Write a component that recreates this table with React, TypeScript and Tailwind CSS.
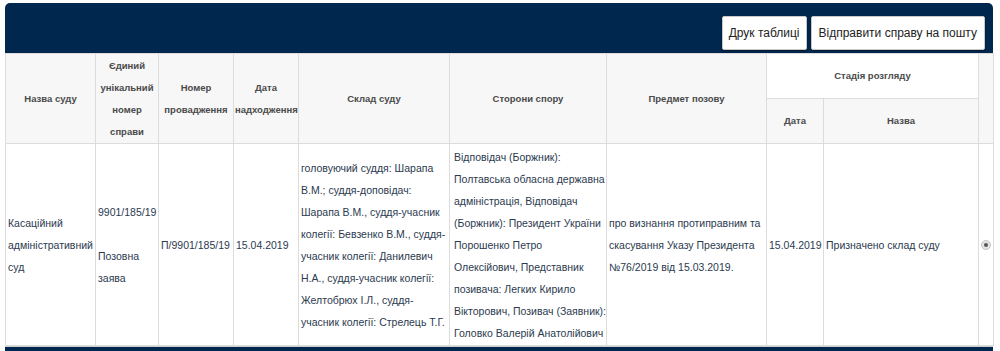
import React from 'react';

const font = { fontFamily: '"Liberation Sans", Arial, sans-serif' };

const th = 'border border-[#dcdcdc] bg-[#f7f7f7] px-[1px] py-0 text-center align-middle text-[9.5px] font-bold text-[#4a4a4a]';
const td = 'border border-[#dcdcdc] bg-white px-[2px] py-[1px] align-middle text-left text-[#2b3a4f]';

const judges = [
  'головуючий суддя: Шарапа',
  'В.М.; суддя-доповідач:',
  'Шарапа В.М., суддя-учасник',
  'колегії: Бевзенко В.М., суддя-',
  'учасник колегії: Данилевич',
  'Н.А., суддя-учасник колегії:',
  'Желтобрюх І.Л., суддя-',
  'учасник колегії: Стрелець Т.Г.',
];

const parties = [
  'Відповідач (Боржник):',
  'Полтавська обласна державна',
  'адміністрація, Відповідач',
  '(Боржник): Президент України',
  'Порошенко Петро',
  'Олексійович, Представник',
  'позивача: Легких Кирило',
  'Вікторович, Позивач (Заявник):',
  'Головко Валерій Анатолійович',
];

const Lines: React.FC<{ lines: string[] }> = ({ lines }) => (
  <>
    {lines.map((l, i) => (
      <span key={i} className="block whitespace-nowrap">{l}</span>
    ))}
  </>
);

const App: React.FC = () => {
  return (
    <div className="w-[1000px] h-[351px] overflow-hidden bg-white pt-[3px] pl-[5px]" style={font}>
      <div className="w-[988px]">
        {/* шапка з кнопками */}
        <div className="h-[50px] rounded-t-[5px] bg-[#00274e] flex justify-end items-end gap-[4px] pr-[8px] pb-[3px]">
          <button className="h-[34px] px-[6px] bg-white border border-[#c8c8c8] rounded-[2px] text-[12px] text-[#222] shadow-[0_1px_2px_rgba(0,0,0,0.4)]">
            Друк таблиці
          </button>
          <button className="h-[34px] px-[7px] bg-white border border-[#c8c8c8] rounded-[2px] text-[12px] text-[#222] shadow-[0_1px_2px_rgba(0,0,0,0.4)]">
            Відправити справу на пошту
          </button>
        </div>

        <table className="w-[988px] table-fixed border-collapse text-[10.5px] leading-[22px]">
          <colgroup>
            <col className="w-[90px]" />
            <col className="w-[63px]" />
            <col className="w-[75px]" />
            <col className="w-[65px]" />
            <col className="w-[151px]" />
            <col className="w-[157px]" />
            <col className="w-[160px]" />
            <col className="w-[57px]" />
            <col className="w-[155px]" />
            <col className="w-[15px]" />
          </colgroup>
          <thead>
            <tr className="h-[45px]">
              <th rowSpan={2} className={th}>Назва суду</th>
              <th rowSpan={2} className={th}>Єдиний унікальний номер справи</th>
              <th rowSpan={2} className={th}>Номер провадження</th>
              <th rowSpan={2} className={th}>Дата надходження</th>
              <th rowSpan={2} className={th}>Склад суду</th>
              <th rowSpan={2} className={th}>Сторони спору</th>
              <th rowSpan={2} className={th}>Предмет позову</th>
              <th colSpan={2} className={`${th} bg-white`}>Стадія розгляду</th>
              <th rowSpan={2} className={th}></th>
            </tr>
            <tr className="h-[45px]">
              <th className={th}>Дата</th>
              <th className={th}>Назва</th>
            </tr>
          </thead>
          <tbody>
            <tr className="h-[202px]">
              <td className={td}>Касаційний адміністративний суд</td>
              <td className={td}>
                9901/185/19
                <br />
                <br />
                Позовна заява
              </td>
              <td className={`${td} whitespace-nowrap`}>П/9901/185/19</td>
              <td className={td}>15.04.2019</td>
              <td className={td}>
                <Lines lines={judges} />
              </td>
              <td className={`${td} pl-[4px]`}>
                <Lines lines={parties} />
              </td>
              <td className={td}>
                про визнання протиправним та скасування Указу Президента №76/2019 від 15.03.2019.
              </td>
              <td className={td}>15.04.2019</td>
              <td className={td}>Призначено склад суду</td>
              <td className={`${td} px-0`}>
                <span className="block w-[10px] h-[10px] mx-auto rounded-full bg-[#e4e4e4] border border-[#c4c4c4] flex items-center justify-center">
                  <span className="block w-[4px] h-[4px] rounded-full bg-[#555]" />
                </span>
              </td>
            </tr>
          </tbody>
        </table>
        <div className="h-[10px] bg-[#00274e] border-t border-[#cfcfcf]" />
      </div>
    </div>
  );
};

export default App;
